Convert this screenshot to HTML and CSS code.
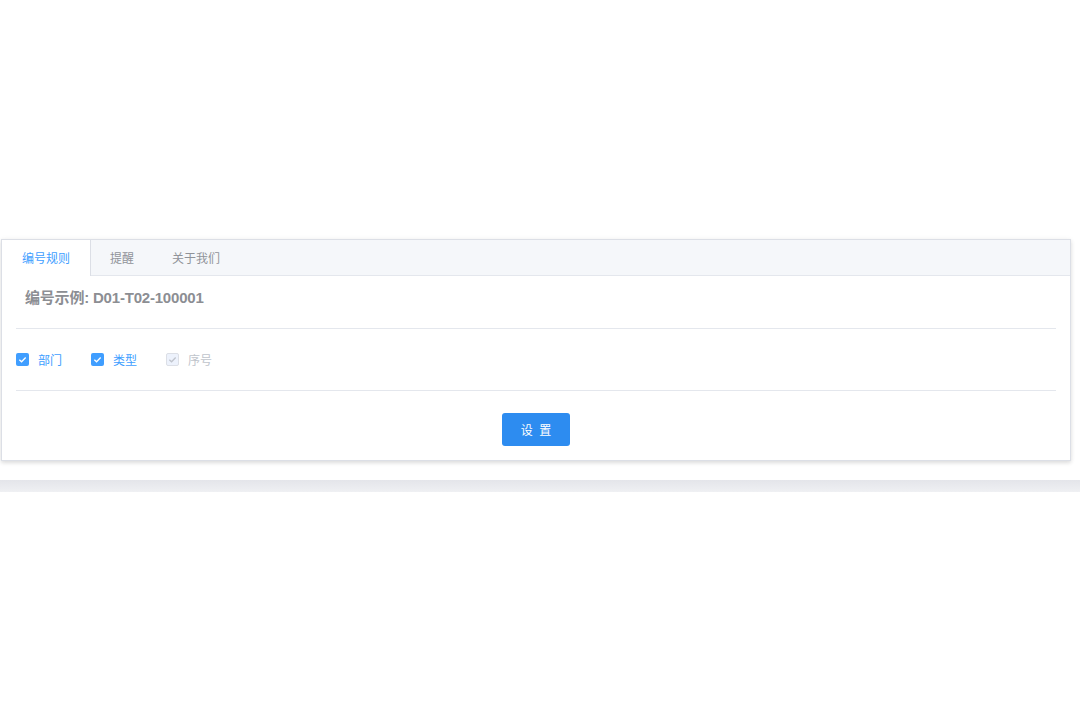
FILE: index.html
```html
<!DOCTYPE html>
<html lang="zh-CN">
<head>
<meta charset="UTF-8" />
<title>编号规则</title>
<link rel="stylesheet" href="styles.css">
</head>
<body>
<div class="page">
  <div class="card">
    <div class="tabs">
      <div class="tab active">编号规则</div>
      <div class="tab">提醒</div>
      <div class="tab">关于我们</div>
    </div>
    <div class="pane">
      <div class="example">编号示例: D01-T02-100001</div>
      <div class="divider"></div>
      <div class="checks">
        <label class="check on">
          <span class="box"><svg viewBox="0 0 14 14" width="13" height="13"><path d="M3.6 7.2 L6 9.4 L10.4 4.8" fill="none" stroke="#fff" stroke-width="1.4"/></svg></span>
          部门
        </label>
        <label class="check on">
          <span class="box"><svg viewBox="0 0 14 14" width="13" height="13"><path d="M3.6 7.2 L6 9.4 L10.4 4.8" fill="none" stroke="#fff" stroke-width="1.4"/></svg></span>
          类型
        </label>
        <label class="check disabled">
          <span class="box"><svg viewBox="0 0 14 14" width="13" height="13"><path d="M3.6 7.2 L6 9.4 L10.4 4.8" fill="none" stroke="#c0c4cc" stroke-width="1.4"/></svg></span>
          序号
        </label>
      </div>
      <div class="divider"></div>
      <div class="actions">
        <button type="button">设 置</button>
      </div>
    </div>
  </div>
  <div class="bar"></div>
</div>
</body>
</html>
```

FILE: styles.css
```css
body {
  margin: 0;
  background: #fff;
  font-family: "Noto Sans CJK SC", "Liberation Sans", sans-serif;
  color: #606266;
}
.page {
  padding-top: 239px;
}
.card {
  margin-left: 1px;
  width: 1068px;
  border: 1px solid #dcdfe6;
  box-shadow: 0 2px 4px rgba(0, 0, 0, 0.12), 0 0 6px rgba(0, 0, 0, 0.04);
  background: #fff;
}
.tabs {
  display: flex;
  height: 35px;
  background: #f5f7fa;
  border-bottom: 1px solid #e4e7ed;
}
.tab {
  line-height: 36px;
  font-size: 12px;
  color: #909399;
  padding: 0 19px;
  margin-bottom: -1px;
}
.tab.active {
  color: #409eff;
  background: #fff;
  border-right: 1px solid #dcdfe6;
  padding: 0 20px;
}
.pane {
  padding: 0 14px;
}
.example {
  padding: 12px 0 0 9px;
  height: 40px;
  font-family: "Liberation Sans", "Noto Sans CJK SC", sans-serif;
  font-size: 15px;
  font-weight: 600;
  color: #8c8e93;
  line-height: 20px;
  letter-spacing: -0.2px;
}
.divider {
  height: 1px;
  background: #e4e7ed;
}
.checks {
  display: flex;
  gap: 29px;
  height: 61px;
  align-items: center;
}
.check {
  display: flex;
  align-items: center;
  font-size: 12px;
  color: #409eff;
}
.box {
  width: 13px;
  height: 13px;
  border-radius: 2px;
  background: #409eff;
  margin-right: 9px;
  display: flex;
}
.check.disabled {
  color: #c0c4cc;
}
.check.disabled .box {
  background: #edf2fc;
  border: 1px solid #dcdfe6;
  width: 11px;
  height: 11px;
}
.check.disabled .box svg {
  margin: -1px;
}
.actions {
  display: flex;
  justify-content: center;
  padding: 22px 0 14px;
}
button {
  width: 68px;
  height: 33px;
  border: none;
  border-radius: 3px;
  background: #2d8cf0;
  color: #fff;
  font-family: "Noto Sans CJK SC", sans-serif;
  font-size: 12px;
  letter-spacing: 2px;
  padding-left: 8px;
}
.bar {
  margin-top: 19px;
  height: 12px;
  background: linear-gradient(#e4e5ea, #eff0f3);
}
```
